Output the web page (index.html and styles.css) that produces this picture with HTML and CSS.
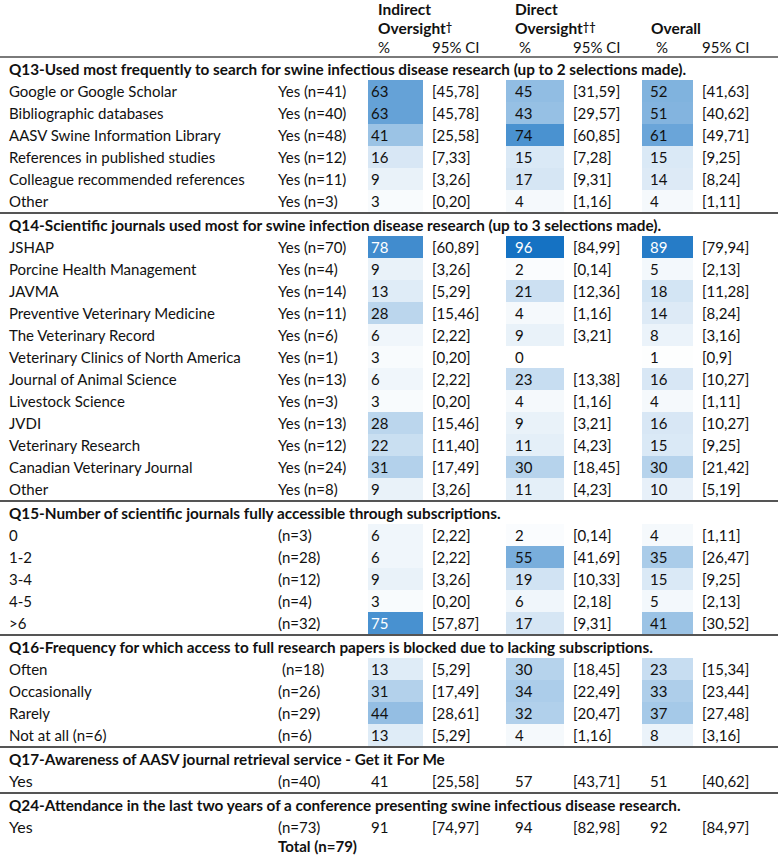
FILE: index.html
```html
<!DOCTYPE html>
<html>
<head>
<meta charset="utf-8">
<link rel="stylesheet" href="styles.css">
</head>
<body>
<div class="table">
  <div class="head">
    <div class="hrow r1">
      <span class="hc c-ind">Indirect</span>
      <span class="hc c-dir">Direct</span>
    </div>
    <div class="hrow r2">
      <span class="hc c-ind">Oversight<span class="dag">†</span></span>
      <span class="hc c-dir">Oversight<span class="dag">††</span></span>
      <span class="hc c-ovr">Overall</span>
    </div>
    <div class="hrow sub">
      <span class="p1">%</span><span class="ci1">95% CI</span>
      <span class="p2">%</span><span class="ci2">95% CI</span>
      <span class="p3">%</span><span class="ci3">95% CI</span>
    </div>
  </div>

  <div class="section">
    <div class="qh">Q13-Used most frequently to search for swine infectious disease research (up to 2 selections made).</div>
    <div class="row"><span class="lab">Google or Google Scholar</span><span class="n">Yes (n=41)</span><span class="v v1" style="--p:63">63</span><span class="ci">[45,78]</span><span class="v v2" style="--p:45">45</span><span class="ci">[31,59]</span><span class="v v3" style="--p:52">52</span><span class="ci">[41,63]</span></div>
    <div class="row"><span class="lab">Bibliographic databases</span><span class="n">Yes (n=40)</span><span class="v v1" style="--p:63">63</span><span class="ci">[45,78]</span><span class="v v2" style="--p:43">43</span><span class="ci">[29,57]</span><span class="v v3" style="--p:51">51</span><span class="ci">[40,62]</span></div>
    <div class="row"><span class="lab">AASV Swine Information Library</span><span class="n">Yes (n=48)</span><span class="v v1" style="--p:41">41</span><span class="ci">[25,58]</span><span class="v v2" style="--p:74">74</span><span class="ci">[60,85]</span><span class="v v3" style="--p:61">61</span><span class="ci">[49,71]</span></div>
    <div class="row"><span class="lab">References in published studies</span><span class="n">Yes (n=12)</span><span class="v v1" style="--p:16">16</span><span class="ci">[7,33]</span><span class="v v2" style="--p:15">15</span><span class="ci">[7,28]</span><span class="v v3" style="--p:15">15</span><span class="ci">[9,25]</span></div>
    <div class="row"><span class="lab">Colleague recommended references</span><span class="n">Yes (n=11)</span><span class="v v1" style="--p:9">9</span><span class="ci">[3,26]</span><span class="v v2" style="--p:17">17</span><span class="ci">[9,31]</span><span class="v v3" style="--p:14">14</span><span class="ci">[8,24]</span></div>
    <div class="row"><span class="lab">Other</span><span class="n">Yes (n=3)</span><span class="v v1" style="--p:3">3</span><span class="ci">[0,20]</span><span class="v v2" style="--p:4">4</span><span class="ci">[1,16]</span><span class="v v3" style="--p:4">4</span><span class="ci">[1,11]</span></div>
  </div>

  <div class="section">
    <div class="qh">Q14-Scientific journals used most for swine infection disease research (up to 3 selections made).</div>
    <div class="row"><span class="lab">JSHAP</span><span class="n">Yes (n=70)</span><span class="v v1 hi" style="--p:78">78</span><span class="ci">[60,89]</span><span class="v v2 hi" style="--p:96">96</span><span class="ci">[84,99]</span><span class="v v3 hi" style="--p:89">89</span><span class="ci">[79,94]</span></div>
    <div class="row"><span class="lab">Porcine Health Management</span><span class="n">Yes (n=4)</span><span class="v v1" style="--p:9">9</span><span class="ci">[3,26]</span><span class="v v2" style="--p:2">2</span><span class="ci">[0,14]</span><span class="v v3" style="--p:5">5</span><span class="ci">[2,13]</span></div>
    <div class="row"><span class="lab">JAVMA</span><span class="n">Yes (n=14)</span><span class="v v1" style="--p:13">13</span><span class="ci">[5,29]</span><span class="v v2" style="--p:21">21</span><span class="ci">[12,36]</span><span class="v v3" style="--p:18">18</span><span class="ci">[11,28]</span></div>
    <div class="row"><span class="lab">Preventive Veterinary Medicine</span><span class="n">Yes (n=11)</span><span class="v v1" style="--p:28">28</span><span class="ci">[15,46]</span><span class="v v2" style="--p:4">4</span><span class="ci">[1,16]</span><span class="v v3" style="--p:14">14</span><span class="ci">[8,24]</span></div>
    <div class="row"><span class="lab">The Veterinary Record</span><span class="n">Yes (n=6)</span><span class="v v1" style="--p:6">6</span><span class="ci">[2,22]</span><span class="v v2" style="--p:9">9</span><span class="ci">[3,21]</span><span class="v v3" style="--p:8">8</span><span class="ci">[3,16]</span></div>
    <div class="row"><span class="lab">Veterinary Clinics of North America</span><span class="n">Yes (n=1)</span><span class="v v1" style="--p:3">3</span><span class="ci">[0,20]</span><span class="v v2" style="--p:0">0</span><span class="ci"></span><span class="v v3" style="--p:1">1</span><span class="ci">[0,9]</span></div>
    <div class="row"><span class="lab">Journal of Animal Science</span><span class="n">Yes (n=13)</span><span class="v v1" style="--p:6">6</span><span class="ci">[2,22]</span><span class="v v2" style="--p:23">23</span><span class="ci">[13,38]</span><span class="v v3" style="--p:16">16</span><span class="ci">[10,27]</span></div>
    <div class="row"><span class="lab">Livestock Science</span><span class="n">Yes (n=3)</span><span class="v v1" style="--p:3">3</span><span class="ci">[0,20]</span><span class="v v2" style="--p:4">4</span><span class="ci">[1,16]</span><span class="v v3" style="--p:4">4</span><span class="ci">[1,11]</span></div>
    <div class="row"><span class="lab">JVDI</span><span class="n">Yes (n=13)</span><span class="v v1" style="--p:28">28</span><span class="ci">[15,46]</span><span class="v v2" style="--p:9">9</span><span class="ci">[3,21]</span><span class="v v3" style="--p:16">16</span><span class="ci">[10,27]</span></div>
    <div class="row"><span class="lab">Veterinary Research</span><span class="n">Yes (n=12)</span><span class="v v1" style="--p:22">22</span><span class="ci">[11,40]</span><span class="v v2" style="--p:11">11</span><span class="ci">[4,23]</span><span class="v v3" style="--p:15">15</span><span class="ci">[9,25]</span></div>
    <div class="row"><span class="lab">Canadian Veterinary Journal</span><span class="n">Yes (n=24)</span><span class="v v1" style="--p:31">31</span><span class="ci">[17,49]</span><span class="v v2" style="--p:30">30</span><span class="ci">[18,45]</span><span class="v v3" style="--p:30">30</span><span class="ci">[21,42]</span></div>
    <div class="row"><span class="lab">Other</span><span class="n">Yes (n=8)</span><span class="v v1" style="--p:9">9</span><span class="ci">[3,26]</span><span class="v v2" style="--p:11">11</span><span class="ci">[4,23]</span><span class="v v3" style="--p:10">10</span><span class="ci">[5,19]</span></div>
  </div>

  <div class="section">
    <div class="qh">Q15-Number of scientific journals fully accessible through subscriptions.</div>
    <div class="row"><span class="lab">0</span><span class="n">(n=3)</span><span class="v v1" style="--p:6">6</span><span class="ci">[2,22]</span><span class="v v2" style="--p:2">2</span><span class="ci">[0,14]</span><span class="v v3" style="--p:4">4</span><span class="ci">[1,11]</span></div>
    <div class="row"><span class="lab">1-2</span><span class="n">(n=28)</span><span class="v v1" style="--p:6">6</span><span class="ci">[2,22]</span><span class="v v2" style="--p:55">55</span><span class="ci">[41,69]</span><span class="v v3" style="--p:35">35</span><span class="ci">[26,47]</span></div>
    <div class="row"><span class="lab">3-4</span><span class="n">(n=12)</span><span class="v v1" style="--p:9">9</span><span class="ci">[3,26]</span><span class="v v2" style="--p:19">19</span><span class="ci">[10,33]</span><span class="v v3" style="--p:15">15</span><span class="ci">[9,25]</span></div>
    <div class="row"><span class="lab">4-5</span><span class="n">(n=4)</span><span class="v v1" style="--p:3">3</span><span class="ci">[0,20]</span><span class="v v2" style="--p:6">6</span><span class="ci">[2,18]</span><span class="v v3" style="--p:5">5</span><span class="ci">[2,13]</span></div>
    <div class="row"><span class="lab">&gt;6</span><span class="n">(n=32)</span><span class="v v1 hi" style="--p:75">75</span><span class="ci">[57,87]</span><span class="v v2" style="--p:17">17</span><span class="ci">[9,31]</span><span class="v v3" style="--p:41">41</span><span class="ci">[30,52]</span></div>
  </div>

  <div class="section">
    <div class="qh">Q16-Frequency for which access to full research papers is blocked due to lacking subscriptions.</div>
    <div class="row"><span class="lab">Often</span><span class="n ind">(n=18)</span><span class="v v1" style="--p:13">13</span><span class="ci">[5,29]</span><span class="v v2" style="--p:30">30</span><span class="ci">[18,45]</span><span class="v v3" style="--p:23">23</span><span class="ci">[15,34]</span></div>
    <div class="row"><span class="lab">Occasionally</span><span class="n">(n=26)</span><span class="v v1" style="--p:31">31</span><span class="ci">[17,49]</span><span class="v v2" style="--p:34">34</span><span class="ci">[22,49]</span><span class="v v3" style="--p:33">33</span><span class="ci">[23,44]</span></div>
    <div class="row"><span class="lab">Rarely</span><span class="n">(n=29)</span><span class="v v1" style="--p:44">44</span><span class="ci">[28,61]</span><span class="v v2" style="--p:32">32</span><span class="ci">[20,47]</span><span class="v v3" style="--p:37">37</span><span class="ci">[27,48]</span></div>
    <div class="row"><span class="lab">Not at all (n=6)</span><span class="n">(n=6)</span><span class="v v1" style="--p:13">13</span><span class="ci">[5,29]</span><span class="v v2" style="--p:4">4</span><span class="ci">[1,16]</span><span class="v v3" style="--p:8">8</span><span class="ci">[3,16]</span></div>
  </div>

  <div class="section">
    <div class="qh">Q17-Awareness of AASV journal retrieval service - Get it For Me</div>
    <div class="row plain"><span class="lab big">Yes</span><span class="n">(n=40)</span><span class="v">41</span><span class="ci">[25,58]</span><span class="v">57</span><span class="ci">[43,71]</span><span class="v">51</span><span class="ci">[40,62]</span></div>
  </div>

  <div class="section last">
    <div class="qh">Q24-Attendance in the last two years of a conference presenting swine infectious disease research.</div>
    <div class="row plain"><span class="lab big">Yes</span><span class="n">(n=73)</span><span class="v">91</span><span class="ci">[74,97]</span><span class="v">94</span><span class="ci">[82,98]</span><span class="v">92</span><span class="ci">[84,97]</span></div>
    <div class="row plain total-row"><span class="lab"></span><span class="n total">Total (n=79)</span></div>
  </div>
</div>
</body>
</html>
```
FILE: styles.css
```css
html, body {
  margin: 0;
  padding: 0;
  background: #ffffff;
}
body {
  font-family: Lato, "Open Sans", sans-serif;
  font-size: 15px;
  color: #111;
  width: 778px;
  overflow: hidden;
}
.table {
  width: 778px;
}
.head {
  border-bottom: 2px solid #7a7a7a;
}
.hrow {
  display: grid;
  grid-template-columns: 378px 137px 136px 127px;
  font-weight: 700;
  font-size: 15.5px;
  height: 19px;
  line-height: 19px;
}
.hrow .hc.c-ind { grid-column: 2; }
.hrow .hc.c-dir { grid-column: 3; }
.hrow .hc.c-ovr { grid-column: 4; }
.dag {
  font-size: 11px;
  vertical-align: 3px;
  line-height: 0;
}
.hrow.sub {
  height: 18px;
  line-height: 18px;
  font-size: 15px;
  font-weight: 400;
  grid-template-columns: 378px 54px 83px 58px 78px 51px 76px;
}
.hrow.sub .p1 { grid-column: 2; }
.hrow.sub .p2 { padding-left: 4px; }
.hrow.sub .p3 { padding-left: 5px; }
.section {
  border-bottom: 2px solid #555;
}
.section.last {
  border-bottom: none;
}
.qh {
  height: 22px;
  line-height: 22px;
  padding-left: 9px;
  font-weight: 700;
  font-size: 15.3px;
  white-space: nowrap;
}
.row {
  display: grid;
  grid-template-columns: 278px 90px 55px 83px 58px 78px 51px 85px;
  height: 22px;
  line-height: 22px;
  white-space: nowrap;
}
.row.total-row {
  height: 17px;
  line-height: 17px;
}
.row > span {
  display: block;
}
.lab {
  padding-left: 9px;
}
.lab.big {
  font-size: 16px;
}
.n.ind {
  padding-left: 4px;
}
.n.total {
  font-weight: 700;
}
.v {
  padding-left: 9px;
  background: color-mix(in srgb, #0b6cc0 calc(var(--p, 0) * 1%), #ffffff);
}
.v.v1 { padding-left: 3px; }
.v.v3 { padding-left: 8px; }
.row.plain .v { background: none; }
.row.plain .v:nth-child(3) { padding-left: 3px; }
.row.plain .v:nth-child(7) { padding-left: 8px; }
.v.hi {
  color: #ffffff;
}
.ci {
  padding-left: 9px;
}
```
